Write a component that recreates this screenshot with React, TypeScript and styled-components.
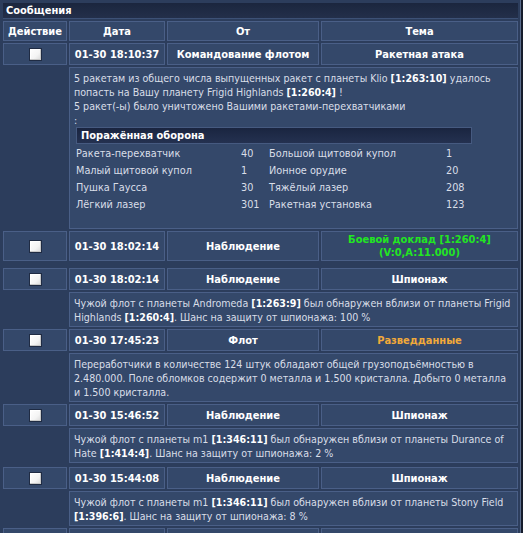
import React from "react";
import styled, { createGlobalStyle, css } from "styled-components";

const Global = createGlobalStyle`
  html, body { margin: 0; padding: 0; background: #2c3d5c; }
  body { font-family: "DejaVu Sans Condensed", "DejaVu Sans", sans-serif; font-size: 11px; color: #d9dee8; }
`;

const Page = styled.div`
  display: flex;
  width: 523px;
  height: 533px;
  overflow: hidden;
  background: #2c3d5c;
`;

const Frame = styled.div`
  flex: 1;
  padding: 1px 0 0 1px;
`;

const Edge = styled.div`
  width: 4px;
  background: linear-gradient(90deg, #5a6c8c 0 1px, #151c2c 1px 100%);
`;

const Table = styled.table`
  width: 519px;
  table-layout: fixed;
  border-collapse: separate;
  border-spacing: 2px;
`;

const TitleCell = styled.td`
  box-sizing: border-box;
  height: 16px;
  padding: 0 3px;
  line-height: 15px;
  background: linear-gradient(180deg, #1b263e 0%, #232f4a 100%);
  border-bottom: 1px solid #3d5176;
  color: #ffffff;
  font-weight: bold;
  text-align: left;
`;

const baseCell = css`
  box-sizing: border-box;
  background: #34486a;
  border: 1px solid #4a5f87;
  text-align: center;
  vertical-align: middle;
`;

const HeadCell = styled.th`
  ${baseCell};
  height: 20px;
  padding: 0 2px;
  line-height: 13px;
  color: #ffffff;
  font-weight: bold;
`;

const InfoCell = styled.td<{ $tone?: "green" | "orange" }>`
  ${baseCell};
  height: 22px;
  padding: 1px 2px;
  line-height: 13px;
  font-weight: bold;
  color: ${(p) => (p.$tone === "green" ? "#22e622" : p.$tone === "orange" ? "#f0a93a" : "#ffffff")};
`;

const CheckCell = styled.td`
  ${baseCell};
  height: 22px;
  padding: 1px;
  line-height: 13px;
`;

const Check = styled.span`
  display: inline-block;
  width: 11px;
  height: 11px;
  vertical-align: middle;
  background: linear-gradient(135deg, #ffffff 0%, #f4f4f4 60%, #d8d8d8 100%);
  border: 1px solid #1f2b43;
  box-shadow: inset -1px -1px 0 #c8c8c8, inset 1px 1px 0 #ffffff;
`;

const EmptyCell = styled.td`
  padding: 0;
`;

const BodyCell = styled.td`
  ${baseCell};
  text-align: left;
  padding: 2.5px 3px 2.5px 4px;
  font-size: 10.6px;
  line-height: 14px;
  color: #d9dee8;
`;

const Coord = styled.b`
  color: #ffffff;
  font-size: 10.6px;
`;

const SpacerCell = styled.td<{ $h: number }>`
  height: ${(p) => p.$h}px;
  padding: 0;
`;

const Report = styled.div`
  margin: 0 0 14px 2px;
  width: 396px;
`;

const ReportTitle = styled.div`
  box-sizing: border-box;
  background: linear-gradient(180deg, #1a2540 0%, #243150 100%);
  border: 1px solid #465a80;
  color: #ffffff;
  font-size: 11px;
  font-weight: bold;
  padding: 0 4px;
  height: 17px;
  line-height: 15px;
  margin-bottom: 3px;
`;

const ReportGrid = styled.div`
  display: grid;
  grid-template-columns: 165px 28px 177px auto;
  row-gap: 3px;
  line-height: 14px;
  font-size: 10.8px;
`;

type Msg = {
  date: string;
  from: string;
  subject: React.ReactNode;
  tone?: "green" | "orange";
  body?: React.ReactNode;
  gapBefore?: number;
};

const defense: [string, string, string, string][] = [
  ["Ракета-перехватчик", "40", "Большой щитовой купол", "1"],
  ["Малый щитовой купол", "1", "Ионное орудие", "20"],
  ["Пушка Гаусса", "30", "Тяжёлый лазер", "208"],
  ["Лёгкий лазер", "301", "Ракетная установка", "123"],
];

const messages: Msg[] = [
  {
    date: "01-30 18:10:37",
    from: "Командование флотом",
    subject: "Ракетная атака",
    body: (
      <>
        5 ракетам из общего числа выпущенных ракет с планеты Klio <Coord>[1:263:10]</Coord> удалось попасть на Вашу
        планету Frigid Highlands <Coord>[1:260:4]</Coord> !
        <br />5 ракет(-ы) было уничтожено Вашими ракетами-перехватчиками
        <br />:
        <Report>
          <ReportTitle>Поражённая оборона</ReportTitle>
          <ReportGrid>
            {defense.map((r) => (
              <React.Fragment key={r[0]}>
                <span>{r[0]}</span>
                <span>{r[1]}</span>
                <span>{r[2]}</span>
                <span>{r[3]}</span>
              </React.Fragment>
            ))}
          </ReportGrid>
        </Report>
      </>
    ),
  },
  {
    date: "01-30 18:02:14",
    from: "Наблюдение",
    tone: "green",
    subject: (
      <>
        Боевой доклад [1:260:4]
        <br />
        (V:0,A:11.000)
      </>
    ),
  },
  {
    date: "01-30 18:02:14",
    from: "Наблюдение",
    subject: "Шпионаж",
    gapBefore: 3,
    body: (
      <>
        Чужой флот с планеты Andromeda <Coord>[1:263:9]</Coord> был обнаружен вблизи от планеты Frigid Highlands{" "}
        <Coord>[1:260:4]</Coord>. Шанс на защиту от шпионажа: 100 %
      </>
    ),
  },
  {
    date: "01-30 17:45:23",
    from: "Флот",
    subject: "Разведданные",
    tone: "orange",
    body: (
      <>
        Переработчики в количестве 124 штук обладают общей грузоподъёмностью в 2.480.000. Поле обломков содержит 0
        металла и 1.500 кристалла. Добыто 0 металла и 1.500 кристалла.
      </>
    ),
  },
  {
    date: "01-30 15:46:52",
    from: "Наблюдение",
    subject: "Шпионаж",
    body: (
      <>
        Чужой флот с планеты m1 <Coord>[1:346:11]</Coord> был обнаружен вблизи от планеты Durance of Hate{" "}
        <Coord>[1:414:4]</Coord>. Шанс на защиту от шпионажа: 2 %
      </>
    ),
  },
  {
    date: "01-30 15:44:08",
    from: "Наблюдение",
    subject: "Шпионаж",
    gapBefore: 0.01,
    body: (
      <>
        Чужой флот с планеты m1 <Coord>[1:346:11]</Coord> был обнаружен вблизи от планеты Stony Field{" "}
        <Coord>[1:396:6]</Coord>. Шанс на защиту от шпионажа: 8 %
      </>
    ),
  },
];

export default function App() {
  return (
    <>
      <Global />
      <Page>
        <Frame>
          <Table>
            <colgroup>
              <col style={{ width: 64 }} />
              <col style={{ width: 96 }} />
              <col style={{ width: 152 }} />
              <col style={{ width: 197 }} />
            </colgroup>
            <tbody>
              <tr>
                <TitleCell colSpan={4}>Сообщения</TitleCell>
              </tr>
              <tr>
                <HeadCell>Действие</HeadCell>
                <HeadCell>Дата</HeadCell>
                <HeadCell>От</HeadCell>
                <HeadCell>Тема</HeadCell>
              </tr>
              {messages.map((m, i) => (
                <React.Fragment key={i}>
                  {m.gapBefore !== undefined ? (
                    <tr>
                      <SpacerCell colSpan={4} $h={m.gapBefore} />
                    </tr>
                  ) : null}
                  <tr>
                    <CheckCell>
                      <Check />
                    </CheckCell>
                    <InfoCell>{m.date}</InfoCell>
                    <InfoCell>{m.from}</InfoCell>
                    <InfoCell $tone={m.tone}>{m.subject}</InfoCell>
                  </tr>
                  {m.body ? (
                    <tr>
                      <EmptyCell />
                      <BodyCell colSpan={3}>{m.body}</BodyCell>
                    </tr>
                  ) : null}
                </React.Fragment>
              ))}
              <tr>
                <CheckCell />
                <InfoCell />
                <InfoCell />
                <InfoCell />
              </tr>
            </tbody>
          </Table>
        </Frame>
        <Edge />
      </Page>
    </>
  );
}
